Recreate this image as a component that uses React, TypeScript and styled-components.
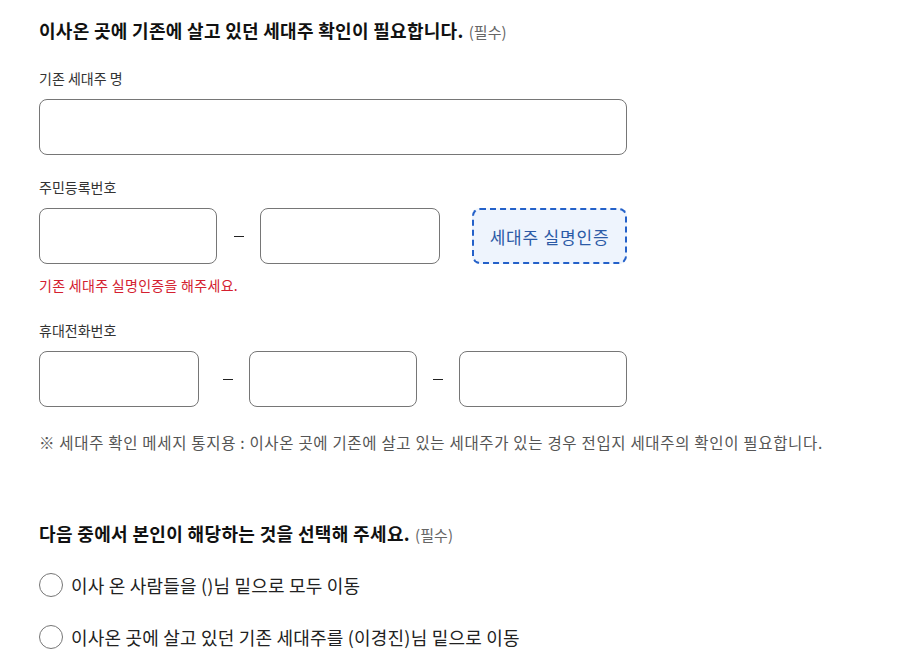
import React from 'react';
import styled, { createGlobalStyle } from 'styled-components';

const GlobalStyle = createGlobalStyle`
  html, body {
    margin: 0;
    padding: 0;
    background: #ffffff;
  }
  body {
    font-family: "Noto Sans CJK KR", "Noto Sans", sans-serif;
    color: #111111;
  }
`;

const Page = styled.div`
  padding: 17px 0 0 39px;
  width: 860px;
`;

const Heading = styled.h2<{ $top?: number; $ls: number }>`
  margin: ${(p) => p.$top || 0}px 0 0;
  font-size: 18px;
  line-height: 26px;
  font-weight: 700;
  color: #111111;
  letter-spacing: ${(p) => p.$ls}px;
`;

const Required = styled.span`
  font-size: 15px;
  font-weight: 400;
  color: #666666;
  margin-left: 5px;
  letter-spacing: 0.1px;
`;

const Field = styled.div<{ $top: number }>`
  margin-top: ${(p) => p.$top}px;
  width: 588px;
`;

const Label = styled.label`
  display: block;
  font-size: 14px;
  line-height: 20px;
  color: #333333;
  margin-bottom: 11px;
`;

const Row = styled.div`
  display: flex;
  align-items: center;
`;

const Input = styled.input<{ $w?: number }>`
  box-sizing: border-box;
  width: ${(p) => (p.$w ? `${p.$w}px` : '100%')};
  height: 56px;
  border: 1px solid #767676;
  border-radius: 8px;
  padding: 0 14px;
  font-size: 16px;
  font-family: inherit;
  background: #fff;
  outline: none;
`;

const Dash = styled.span<{ $l: number; $r: number }>`
  display: block;
  width: 10px;
  height: 1px;
  background: #222;
  margin: 0 ${(p) => p.$r}px 0 ${(p) => p.$l}px;
`;

const AuthButton = styled.button`
  box-sizing: border-box;
  margin-left: 32px;
  width: 155px;
  height: 56px;
  padding: 0;
  border: 2px dashed #2461c9;
  border-radius: 8px;
  background: #eef4fd;
  color: #2b5aa6;
  font-family: inherit;
  font-size: 17px;
  letter-spacing: 0.8px;
  cursor: pointer;
`;

const ErrorText = styled.p`
  margin: 11px 0 0;
  font-size: 14px;
  line-height: 20px;
  letter-spacing: 0.3px;
  color: #d4202f;
`;

const Note = styled.p`
  margin: 24px 0 0;
  font-size: 15.5px;
  line-height: 22px;
  letter-spacing: 0.68px;
  color: #555555;
  white-space: nowrap;
`;

const RadioList = styled.div`
  display: flex;
  flex-direction: column;
  gap: 24px;
  margin-top: 23px;
`;

const RadioItem = styled.label`
  display: flex;
  align-items: center;
  gap: 8px;
  font-size: 18px;
  line-height: 28px;
  letter-spacing: 0.2px;
  color: #222222;
  cursor: pointer;
`;

const RadioCircle = styled.input.attrs({ type: 'radio' })`
  appearance: none;
  margin: 0;
  width: 24px;
  height: 24px;
  border: 1px solid #767676;
  border-radius: 50%;
  background: #fff;
`;

const App = () => {
  return (
    <>
      <GlobalStyle />
      <Page>
        <Heading $ls={0.3}>
          이사온 곳에 기존에 살고 있던 세대주 확인이 필요합니다.<Required>(필수)</Required>
        </Heading>

        <Field $top={23}>
          <Label>기존 세대주 명</Label>
          <Input />
        </Field>

        <Field $top={22}>
          <Label>주민등록번호</Label>
          <Row>
            <Input $w={178} />
            <Dash $l={17} $r={16} />
            <Input $w={180} />
            <AuthButton type="button">세대주 실명인증</AuthButton>
          </Row>
          <ErrorText>기존 세대주 실명인증을 해주세요.</ErrorText>
        </Field>

        <Field $top={25}>
          <Label>휴대전화번호</Label>
          <Row>
            <Input $w={160} />
            <Dash $l={24} $r={16} />
            <Input $w={168} />
            <Dash $l={16} $r={16} />
            <Input $w={168} />
          </Row>
        </Field>

        <Note>
          ※ 세대주 확인 메세지 통지용 : 이사온 곳에 기존에 살고 있는 세대주가 있는 경우 전입지 세대주의 확인이 필요합니다.
        </Note>

        <Heading $top={67} $ls={0.35}>
          다음 중에서 본인이 해당하는 것을 선택해 주세요.<Required>(필수)</Required>
        </Heading>

        <RadioList>
          <RadioItem>
            <RadioCircle name="move" />
            이사 온 사람들을 ()님 밑으로 모두 이동
          </RadioItem>
          <RadioItem>
            <RadioCircle name="move" />
            이사온 곳에 살고 있던 기존 세대주를 (이경진)님 밑으로 이동
          </RadioItem>
        </RadioList>
      </Page>
    </>
  );
};

export default App;
